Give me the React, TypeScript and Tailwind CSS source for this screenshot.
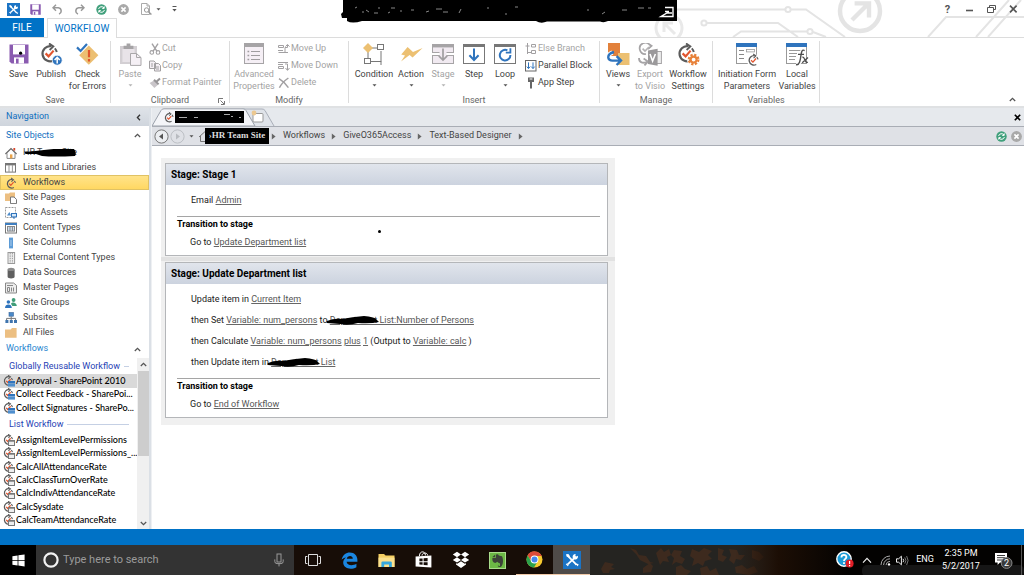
import React from "react";

type Kids = { children?: React.ReactNode };

function Svg({ w, h, vb, children, className = "" }: Kids & { w: number; h: number; vb?: string; className?: string }) {
  return (
    <svg width={w} height={h} viewBox={vb ?? `0 0 ${w} ${h}`} fill="none" aria-hidden="true" className={`shrink-0 ${className}`}>
      {children}
    </svg>
  );
}

/* ---------- shared glyphs ---------- */

function ToolsLogo({ size }: { size: number }) {
  return (
    <Svg w={size} h={size} vb="0 0 18 18">
      <rect width="18" height="18" fill="#1b74c5" />
      <path d="M4.6 4.6 L13.6 13.8 M12.6 5.8 L4.4 13.6" stroke="#fff" strokeWidth="1.8" />
      <path d="M3 3.2 L5.4 3 L7 5.2 L5.6 6.6 L3.6 5.6 Z" fill="#fff" />
      <path d="M14.8 4.8 A2.7 2.7 0 1 1 12.6 3.1 L12.4 5 L13.2 5.6 Z" fill="#fff" />
      <path d="M3.2 12.8 L5.2 14.9 M12.2 13.2 L14.8 13.6 L14.4 15" stroke="#fff" strokeWidth="1.2" />
    </Svg>
  );
}

function Cycle({ x = 0, y = 0, s = 1 }: { x?: number; y?: number; s?: number }) {
  return (
    <g transform={`translate(${x} ${y}) scale(${s})`}>
      <path d="M14 17.2 A7.6 7.6 0 1 1 11.6 3.2" stroke="#5b5b5b" strokeWidth="2.2" />
      <path d="M9 0.4 L13.4 3.4 L9.6 7" stroke="#5b5b5b" strokeWidth="1.8" />
      <path d="M14.8 5.4 A7.6 7.6 0 0 1 16.8 9" stroke="#5b5b5b" strokeWidth="2" />
      <path d="M5.6 10.4 L8.6 13.4 L13.6 7.6" stroke="#e2552f" strokeWidth="2.2" />
    </g>
  );
}

function RefreshDot() {
  return (
    <Svg w={11} h={11}>
      <circle cx="5.5" cy="5.5" r="5.2" fill="#41a07c" />
      <path d="M2.6 5 A3 3 0 0 1 8 4 M8.2 2.4 V4.4 H6.2 M8.4 6 A3 3 0 0 1 3 7 M2.8 8.6 V6.6 H4.8" stroke="#fff" strokeWidth="1" />
    </Svg>
  );
}

function StopDot() {
  return (
    <Svg w={11} h={11}>
      <circle cx="5.5" cy="5.5" r="5.4" fill="#a9a9a9" />
      <path d="M3.4 3.4 L7.6 7.6 M7.6 3.4 L3.4 7.6" stroke="#fff" strokeWidth="1.6" />
    </Svg>
  );
}

function Floppy({ size, dot }: { size: number; dot?: boolean }) {
  return (
    <Svg w={size} h={size} vb="0 0 20 20">
      <path d="M0.5 0.5 H19.5 V19.5 H2.5 L0.5 17.5 Z" fill="#8a5bb0" />
      <rect x="4" y="1" width="12" height="9.4" fill="#fff" />
      <rect x="5" y="13.4" width="10" height="6.1" fill="#fff" />
      <rect x="7" y="14.6" width="2.6" height="4.9" fill="#8a5bb0" />
      {dot && <circle cx="11.6" cy="9.2" r="1.6" fill="#000" />}
    </Svg>
  );
}

function Caret({ dim }: { dim?: boolean }) {
  return (
    <Svg w={5} h={3}>
      <path d="M0.5 0.2 H4.5 L2.5 2.6 Z" fill={dim ? "#b5b5b5" : "#555"} />
    </Svg>
  );
}

/* ---------- ribbon icons ---------- */

const PublishIcon = (
  <Svg w={23} h={23}>
    <Cycle />
    <circle cx="17.2" cy="17.2" r="5" fill="#2f74bd" stroke="#fff" strokeWidth="0.8" />
    <path d="M17.2 20.6 V14.6 M14.6 17 L17.2 14.4 L19.8 17" stroke="#fff" strokeWidth="1.5" />
  </Svg>
);
const CheckIcon = (
  <Svg w={23} h={23}>
    <path d="M12.8 2.6 L22.4 12.2 L12.8 21.8 L3.2 12.2 Z" fill="#ecbf72" />
    <path d="M13 7 V14.2 M13 16 V18.4" stroke="#e0552b" strokeWidth="2.2" />
    <path d="M1 4.4 L4.6 8 L11 1" stroke="#2f74bd" strokeWidth="2.2" />
  </Svg>
);
const PasteIcon = (
  <Svg w={23} h={23}>
    <path d="M1 3 H18 V21 H1 Z" fill="#d3cfd3" />
    <path d="M3.4 6 H15.6 V19 H3.4 Z" fill="#e8e3e8" />
    <path d="M4.6 6 V2.8 H7.6 V0.6 H11.4 V2.8 H14.4 V6 Z" fill="#a5a3a5" />
    <path d="M11.5 10.5 H17.5 L22 14.5 V22.4 H11.5 Z" fill="#f5f0f5" stroke="#a9a7a9" />
    <path d="M17.5 10.5 V14.5 H22" stroke="#a9a7a9" />
  </Svg>
);
const AdvancedIcon = (
  <Svg w={20} h={22}>
    <rect x="0.5" y="0.5" width="19" height="20" fill="#f5eff5" stroke="#a6a4a6" />
    <rect width="20" height="4" fill="#a6a4a6" />
    <path d="M7 8.5 H16 M7 12.5 H16 M7 16.5 H16" stroke="#9f9d9f" />
    <path d="M3.5 8.5 H5.2 M3.5 12.5 H5.2 M3.5 16.5 H5.2" stroke="#9f9d9f" strokeWidth="1.4" />
  </Svg>
);
const ConditionIcon = (
  <Svg w={22} h={22}>
    <path d="M9 5 H14 M5 9 V16 M8 18.5 H18 V8 M18 18 V22" stroke="#777" />
    <path d="M5 0 L10 5 L5 10 L0 5 Z" fill="#ecc072" />
    <rect x="14.5" y="1.5" width="6" height="5" fill="#fff" stroke="#777" />
    <rect x="1.5" y="15.5" width="6" height="5" fill="#fff" stroke="#777" />
  </Svg>
);
const ActionIcon = (
  <Svg w={23} h={22}>
    <path d="M7.6 4 L13 9 L22.6 5 L12.6 14.6 L9.6 12 L1 18.6 L5 12.6 L1.2 11.4 Z" fill="#ecc072" />
  </Svg>
);
const StageIcon = (
  <Svg w={22} h={22}>
    <rect x="0.5" y="1.5" width="21" height="8" fill="#f1eaf1" stroke="#a6a4a6" />
    <rect x="0" y="1" width="22" height="3.4" fill="#a6a4a6" />
    <rect x="0.5" y="12.5" width="21" height="8" fill="#f1eaf1" stroke="#a6a4a6" />
    <rect x="7.5" y="7" width="7" height="11" fill="#f1eaf1" />
    <path d="M11 5.6 V16.6 M6.8 12.8 L11 17 L15.2 12.8" stroke="#a09ea0" strokeWidth="1.7" />
  </Svg>
);
const StepIcon = (
  <Svg w={22} h={22}>
    <rect x="0.5" y="1.5" width="21" height="19" fill="#fff" stroke="#777" />
    <rect x="0" y="1" width="22" height="3" fill="#777" />
    <path d="M11 5.6 V17 M6.4 12.2 L11 17 L15.6 12.2" stroke="#2f74bd" strokeWidth="2" />
  </Svg>
);
const LoopIcon = (
  <Svg w={22} h={22}>
    <rect x="0.5" y="1.5" width="21" height="19" fill="#fff" stroke="#777" />
    <rect x="0" y="1" width="22" height="3" fill="#777" />
    <path d="M16.4 12 A5.3 5.3 0 1 1 13.4 7.4" stroke="#2f74bd" strokeWidth="2" />
    <path d="M16.4 5.2 V9.6 H11.8" stroke="#2f74bd" strokeWidth="1.8" />
  </Svg>
);
const ViewsIcon = (
  <Svg w={23} h={23}>
    <rect x="1" y="0" width="12" height="13" fill="#e2813b" />
    <rect x="11" y="10" width="11.5" height="12" fill="#ecc072" />
    <path d="M5.4 9.4 C-0.6 12 0 18 6 17.6 H13" stroke="#fff" strokeWidth="4.4" />
    <path d="M7 9 C-1 11 0 18 6 17.6 H13 M9.6 13.2 L14 17.6 L9.6 22" stroke="#2f74bd" strokeWidth="2.4" />
  </Svg>
);
const VisioIcon = (
  <Svg w={24} h={23}>
    <path d="M12 2.4 A5.6 5.6 0 1 0 8 11 M9.4 0 L13.6 2.8 L10 6" stroke="#a6a4a6" strokeWidth="1.7" />
    <path d="M4.6 5.6 L7 8 L11 4" stroke="#b5b3b5" strokeWidth="1.6" />
    <path d="M1 15 C1 20 5 20.6 9 18.8 M5.6 15.6 L10 18.6 L6.4 22.4" stroke="#a6a4a6" strokeWidth="1.8" />
    <rect x="17" y="8.5" width="6.4" height="12" fill="#eee" stroke="#a6a4a6" />
    <path d="M10 7.4 L19.6 5.8 V22.8 L10 21 Z" fill="#9b999b" />
    <path d="M12 11 L14.6 18 L17.4 11" stroke="#fff" strokeWidth="1.6" />
  </Svg>
);
const SettingsIcon = (
  <Svg w={23} h={23}>
    <Cycle />
    <circle cx="16.6" cy="16.6" r="5.6" stroke="#fff" strokeWidth="2" />
    <circle cx="16.6" cy="16.6" r="4.8" stroke="#e8823a" strokeWidth="2.2" strokeDasharray="2.2 1.57" />
    <circle cx="16.6" cy="16.6" r="3" stroke="#e8823a" strokeWidth="2.2" />
  </Svg>
);
const FormIcon = (
  <Svg w={23} h={23}>
    <rect x="0.5" y="1.5" width="20" height="19" fill="#fff" stroke="#999" />
    <rect x="0" y="0" width="21" height="4" fill="#2f74bd" />
    <path d="M3 7.5 H8 M3 11.5 H8 M3 15.5 H8" stroke="#888" />
    <rect x="10.5" y="6.5" width="8" height="2.4" stroke="#999" strokeWidth="0.8" />
    <circle cx="16.8" cy="16.8" r="6.4" fill="#fff" />
    <Cycle x={11.6} y={10.8} s={0.62} />
  </Svg>
);
const LocalIcon = (
  <Svg w={23} h={23}>
    <rect x="0.5" y="1.5" width="20" height="19" fill="#fff" stroke="#999" />
    <rect x="0" y="0" width="21" height="4" fill="#2f74bd" />
    <path d="M3 7.5 H18 M3 10.5 H11 M3 13.5 H10 M3 16.5 H9" stroke="#999" />
    <path d="M18.6 7.6 C16 6 15.4 9 15 12 C14.4 17 13.6 22.6 10 21.6 M11.4 11.4 H18" stroke="#fff" strokeWidth="3.6" />
    <path d="M18.6 7.6 C16 6 15.4 9 15 12 C14.4 17 13.6 22.6 10 21.6 M12 11.4 H18" stroke="#4d4d4d" strokeWidth="1.4" />
    <path d="M16.4 14.4 C18.6 13 18.8 20.6 21.8 19.2 M22 14.6 L16.2 19.8" stroke="#4d4d4d" strokeWidth="1.3" />
  </Svg>
);

const CutIcon = (
  <Svg w={12} h={12}>
    <path d="M3 0.6 L8 8.4 M9 0.6 L4 8.4" stroke="#a2a0a2" strokeWidth="1.4" />
    <circle cx="2.8" cy="9.4" r="1.8" stroke="#a2a0a2" strokeWidth="1.1" />
    <circle cx="9" cy="9.4" r="1.8" stroke="#a2a0a2" strokeWidth="1.1" />
  </Svg>
);
const CopyIcon = (
  <Svg w={12} h={12}>
    <path d="M0.5 1 H5 L6.5 2.5 V8.5 H0.5 Z M5.5 3.5 H9.5 L11.5 5.5 V11 H5.5 Z" fill="#f5f0f5" stroke="#a2a0a2" />
    <path d="M2 4 H4 M2 6 H4 M7 7 H10 M7 9 H10" stroke="#a2a0a2" />
  </Svg>
);
const PainterIcon = (
  <Svg w={12} h={12}>
    <path d="M0.6 6 L5 3.6 L9 7.8 L5.4 11 Z" fill="#c9c5c9" />
    <path d="M5 2.8 L9.6 7.4 M7.4 4.8 L11 1.4" stroke="#969496" strokeWidth="2" />
  </Svg>
);
const MoveUpIcon = (
  <Svg w={12} h={12}>
    <path d="M0.5 2.5 H5.5 V4.5 H0.5 Z M0 7.5 H5 M0.5 9.5 H10 M7 9 V4.5 H9.5 V2 M7.5 3.6 L9.5 1.4 L11.5 3.6" stroke="#a2a0a2" />
  </Svg>
);
const MoveDownIcon = (
  <Svg w={12} h={12}>
    <path d="M0.5 6.5 H5.5 V8.5 H0.5 Z M0 2.5 H10 M0 4.5 H5 M7 4 H9.5 V10 M7.5 8 L9.5 10.4 L11.5 8" stroke="#a2a0a2" />
  </Svg>
);
const DeleteIcon = (
  <Svg w={12} h={12}>
    <path d="M1 1.6 C5 4 8 7 10.4 10.6 M10.4 1 C6 4 3 7.4 1.4 10.8" stroke="#a2a0a2" strokeWidth="1.5" />
  </Svg>
);
const ElseIcon = (
  <Svg w={12} h={12}>
    <path d="M2.5 0 V11 M0.5 3 H4.5 M2.5 9.5 H6" stroke="#a2a0a2" />
    <path d="M6.5 1.5 H10.5 V4 H6.5 Z M6.5 7.5 H10.5 V10.5 H6.5 Z" stroke="#a2a0a2" />
  </Svg>
);
const ParallelIcon = (
  <Svg w={12} h={12}>
    <rect x="0.5" y="0.5" width="10.5" height="10.5" fill="#fff" stroke="#666" />
    <path d="M3.5 2.4 V8.4 M1.8 6.6 L3.5 8.6 L5.2 6.6 M8 2.4 V8.4 M6.3 6.6 L8 8.6 L9.7 6.6" stroke="#2f74bd" />
  </Svg>
);
const AppStepIcon = (
  <Svg w={12} h={12}>
    <path d="M3 0.6 H9 V5 H7 V11.6 H5 V5 H3 Z" fill="#666" />
    <path d="M4.6 2 H7.4" stroke="#fff" />
  </Svg>
);

/* ---------- ribbon pieces ---------- */

function Big({ icon, lines, dim, menu, w }: { icon: React.ReactNode; lines: string[]; dim?: boolean; menu?: boolean; w: string }) {
  return (
    <button type="button" className={`flex shrink-0 flex-col items-center pt-1 ${w} ${dim ? "text-[#a3a3a3]" : "text-[#444]"}`}>
      <span className="flex h-6 items-center justify-center">{icon}</span>
      <span className="mt-[2px] flex flex-col items-center text-[9px] leading-3 whitespace-nowrap">
        {lines.map((l) => (
          <span key={l}>{l}</span>
        ))}
      </span>
      {menu && (
        <span className="mt-1">
          <Caret dim={dim} />
        </span>
      )}
    </button>
  );
}

function Small({ icon, label, dim = true }: { icon: React.ReactNode; label: string; dim?: boolean }) {
  return (
    <button type="button" className={`flex h-[17px] items-center gap-px text-[9px] whitespace-nowrap ${dim ? "text-[#a3a3a3]" : "text-[#444]"}`}>
      {icon}
      {label}
    </button>
  );
}

function Group({ label, w, corner, children }: Kids & { label: string; w: string; corner?: boolean }) {
  return (
    <section aria-label={label} className={`flex shrink-0 ${w}`}>
      <div className="flex min-w-0 flex-1 flex-col">
        <div className="flex flex-1">{children}</div>
        <div className="relative flex h-3 items-center justify-center text-[9px] leading-3 text-[#666]">
          {label}
          {corner && (
            <Svg w={7} h={7} className="absolute right-1 top-1">
              <path d="M0.5 5 V0.5 H5 M2.5 2.5 L6 6 M6.5 3 V6.5 H3" stroke="#777" />
            </Svg>
          )}
        </div>
      </div>
      <div className="my-[3px] w-px bg-[#dcdcdc]" />
    </section>
  );
}

function QuickAccess() {
  return (
    <div className="relative flex h-[18px] items-center pl-[7px]">
      <ToolsLogo size={13} />
      <div className="flex items-center gap-[11px] pl-[10px]">
        <button type="button" aria-label="Save file"><Floppy size={11} /></button>
        <button type="button" aria-label="Undo">
          <Svg w={11} h={11}><path d="M4 0.8 L1 3.8 L4 6.8 M1 3.8 H6.4 A3.2 3.2 0 0 1 7 10" stroke="#999" strokeWidth="1.5" /></Svg>
        </button>
        <button type="button" aria-label="Redo">
          <Svg w={11} h={11}><path d="M7 0.8 L10 3.8 L7 6.8 M10 3.8 H4.6 A3.2 3.2 0 0 0 4 10" stroke="#999" strokeWidth="1.5" /></Svg>
        </button>
        <button type="button" aria-label="Refresh view"><RefreshDot /></button>
        <button type="button" aria-label="Stop loading"><StopDot /></button>
        <button type="button" aria-label="Preview" className="flex items-center gap-1">
          <Svg w={12} h={12}>
            <path d="M1.5 0.5 H7 L9.5 3 V11.5 H1.5 Z M7 0.5 V3 H9.5" stroke="#aaa" />
            <circle cx="6.6" cy="7" r="2.2" fill="#fff" stroke="#999" />
            <path d="M8.2 8.6 L11.4 11.6" stroke="#999" strokeWidth="1.4" />
          </Svg>
          <Caret />
        </button>
        <button type="button" aria-label="Customize toolbar">
          <Svg w={5} h={6}><path d="M0.5 0.5 H4.5" stroke="#555" /><path d="M0.4 3 H4.6 L2.5 5.4 Z" fill="#555" /></Svg>
        </button>
      </div>
      <div className="ml-auto flex items-center gap-[11px] pr-[5px] text-[#555]">
        <button type="button" aria-label="Help" className="w-[11px] text-[11px] leading-none font-bold">?</button>
        <button type="button" aria-label="Minimize"><Svg w={11} h={10}><path d="M2 6.5 H9" stroke="#555" strokeWidth="1.6" /></Svg></button>
        <button type="button" aria-label="Restore"><Svg w={11} h={10}><path d="M3.5 3.5 V1.5 H9.5 V5.5 H8 M1.5 3.5 H7.5 V8.5 H1.5 Z" stroke="#555" /></Svg></button>
        <button type="button" aria-label="Close"><Svg w={11} h={10}><path d="M2 1.6 L8.6 8.4 M8.6 1.6 L2 8.4" stroke="#555" strokeWidth="1.6" /></Svg></button>
      </div>
    </div>
  );
}

function Circuit() {
  return (
    <svg width="374" height="37" viewBox="650 0 374 37" fill="none" aria-hidden="true" className="absolute top-0 right-0">
      <g stroke="#e4e4e4" strokeWidth="2">
        <path d="M676 9.5 H785 M791 9.5 H806 L845 37 M707 23 H778 L798 37 M733 37 L741 31.5 H807 M813 32 L826 37" />
        <circle cx="788" cy="9.5" r="2.6" />
        <circle cx="704" cy="23" r="2.6" />
        <circle cx="810" cy="31.5" r="2.6" />
        <path d="M928 37 L946 17 H1024 M976 37 L1009 0 M988 37 L1021 0" />
      </g>
      <circle cx="860" cy="11" r="20" stroke="#e4e4e4" strokeWidth="4.5" />
      <path d="M852 20 L868 4 M854.6 3.4 H869 V17.6" stroke="#e4e4e4" strokeWidth="4.4" />
      <circle cx="669" cy="28" r="13" stroke="#e9e9e9" strokeWidth="3" />
      <path d="M675 34 L665 24 M664 32 V23 H673" stroke="#e9e9e9" strokeWidth="3" />
    </svg>
  );
}

function TitleInk() {
  return (
    <svg width="336" height="23" viewBox="341 0 336 23" aria-hidden="true" className="absolute top-0 left-[341px]">
      <path d="M343 0 H677 V21 H608 Q604 23 600 21.5 H547 Q541 24 536 21 H362 Q352 24 347 21 V18 H342 L341 14 L343 12 Z" fill="#000" />
      <path d="M355 8 l2 -1 M362 12 h2 M366 10 l3 2 M374 13 h4 M379 7 v2 M391 8 h4 M388 13 l2 -1 M400 11 h2 M411 10 h3 M426 12 l3 -1 M436 9 h6 M443 12 h5 M459 13 l2 -4 M488 7 v2 M505 14 h2 M515 7 h3 M587 10 h2 M602 14 l3 -2 M622 10 h5 M638 8 h6 M648 8 h3" stroke="#aaa" strokeWidth="0.8" />
      <path d="M665 7.5 H673 V16.5 H661 L667 13 H672 M665 11.5 H669" fill="none" stroke="#fff" strokeWidth="1.4" />
    </svg>
  );
}

function Ribbon() {
  return (
    <header className="relative shrink-0 bg-white">
      <Circuit />
      <QuickAccess />
      <TitleInk />
      <div className="relative flex h-5 items-stretch border-b border-[#dcdcdc] text-[10px]" role="tablist">
        <button type="button" role="tab" aria-selected="false" className="w-11 bg-[#0072c6] text-white">FILE</button>
        <button type="button" role="tab" aria-selected="true" className="-mb-px ml-[3px] w-[70px] border border-b-0 border-[#dcdcdc] bg-white text-[#0072c6]">
          WORKFLOW
        </button>
      </div>
      <div className="relative flex h-[68px] bg-white">
        <Group label="Save" w="w-[111px]">
          <Big w="w-[37px]" icon={<Floppy size={20} dot />} lines={["Save"]} />
          <Big w="w-7" icon={PublishIcon} lines={["Publish"]} />
          <Big w="w-[45px]" icon={CheckIcon} lines={["Check", "for Errors"]} />
        </Group>
        <Group label="Clipboard" w="w-[119px]" corner>
          <Big w="w-[38px]" icon={PasteIcon} lines={["Paste"]} dim menu />
          <div className="flex flex-col pt-[2px]">
            <Small icon={CutIcon} label="Cut" />
            <Small icon={CopyIcon} label="Copy" />
            <Small icon={PainterIcon} label="Format Painter" />
          </div>
        </Group>
        <Group label="Modify" w="w-[119px]">
          <Big w="w-12" icon={AdvancedIcon} lines={["Advanced", "Properties"]} dim />
          <div className="flex flex-col pt-[2px]">
            <Small icon={MoveUpIcon} label="Move Up" />
            <Small icon={MoveDownIcon} label="Move Down" />
            <Small icon={DeleteIcon} label="Delete" />
          </div>
        </Group>
        <Group label="Insert" w="w-[251px]">
          <Big w="w-[50px]" icon={ConditionIcon} lines={["Condition"]} menu />
          <Big w="w-6" icon={ActionIcon} lines={["Action"]} menu />
          <Big w="w-10" icon={StageIcon} lines={["Stage"]} dim menu />
          <Big w="w-[22px]" icon={StepIcon} lines={["Step"]} />
          <Big w="w-10" icon={LoopIcon} lines={["Loop"]} menu />
          <div className="flex flex-col pt-[2px]">
            <Small icon={ElseIcon} label="Else Branch" />
            <Small icon={ParallelIcon} label="Parallel Block" dim={false} />
            <Small icon={AppStepIcon} label="App Step" dim={false} />
          </div>
        </Group>
        <Group label="Manage" w="w-[113px]">
          <Big w="w-9" icon={ViewsIcon} lines={["Views"]} menu />
          <Big w="w-7" icon={VisioIcon} lines={["Export", "to Visio"]} dim />
          <Big w="w-12" icon={SettingsIcon} lines={["Workflow", "Settings"]} />
        </Group>
        <Group label="Variables" w="w-[107px]">
          <Big w="w-[68px]" icon={FormIcon} lines={["Initiation Form", "Parameters"]} />
          <Big w="w-8" icon={LocalIcon} lines={["Local", "Variables"]} />
        </Group>
        <button type="button" aria-label="Collapse ribbon" className="mt-auto mr-2 mb-1 ml-auto">
          <Chevron />
        </button>
      </div>
    </header>
  );
}

/* ---------- navigation pane ---------- */

const siteIcons: Record<string, React.ReactNode> = {
  home: <><path d="M2 6.4 V11.4 H10 V6.4" fill="#fff" stroke="#888" /><path d="M0.4 7 L6 1.6 L11.6 7" stroke="#666" strokeWidth="1.3" /><rect x="5" y="7.4" width="2.4" height="4" fill="#e8a24a" /><rect x="8.4" y="1" width="1.8" height="2.6" fill="#d5452c" /></>,
  lists: <><rect x="0.5" y="1.5" width="10" height="8.6" fill="#fff" stroke="#777" /><path d="M0 2.4 H11" stroke="#777" strokeWidth="2" /><path d="M4 3 V10 M7.4 3 V10" stroke="#999" /></>,
  flow: <Cycle x={1} y={0.8} s={0.56} />,
  pages: <><path d="M0 1.6 H4 L5 0.6 H10 V9 H0 Z" fill="#ecbf82" /><path d="M5.5 5 H9 L11.5 7.4 V11.6 H5.5 Z" fill="#fff" stroke="#777" /></>,
  assets: <><rect x="0.5" y="0.5" width="10" height="10" fill="#fff" stroke="#999" strokeDasharray="2 1" /><path d="M2 8.4 L4.4 5 L6 8.4 Z" fill="#4b8ac9" /><rect x="6.5" y="6.5" width="5" height="3.4" fill="#d6e8f8" stroke="#2f74bd" /><path d="M9 10 V12" stroke="#2f74bd" /></>,
  content: <><rect x="0.5" y="1" width="11" height="10" fill="#fff" stroke="#777" /><path d="M0 2 H12" stroke="#3f7fc0" strokeWidth="2" /><rect x="2.5" y="4.5" width="7" height="4.6" fill="#cfe0f2" stroke="#888" /><path d="M5 5 V9 M7.4 5 V9" stroke="#888" /></>,
  columns: <><rect x="4" y="0.6" width="4" height="10.8" fill="#5c9bd6" /><path d="M5 4 H7 M5 6 H7 M5 8 H7" stroke="#cfe0f2" strokeWidth="0.7" /></>,
  external: <><rect x="3" y="0.5" width="6.6" height="11" fill="#eee" stroke="#999" /><path d="M5.2 1 V11 M7.4 1 V11" stroke="#999" strokeDasharray="1.4 1" /></>,
  data: <><path d="M2.6 2.4 V9.8 C2.6 12 9.6 12 9.6 9.8 V2.4 Z" fill="#5f5f5f" /><ellipse cx="6.1" cy="2.4" rx="3.5" ry="1.6" fill="#8a8a8a" /></>,
  master: <><path d="M0.5 1 H8.6 L11.5 3.4 V11 H0.5 Z" fill="#eee" stroke="#888" /><path d="M2 3.5 H8 M2.5 5.5 V9.5 H4.5 V5.5 Z M6.5 5.5 V9.5 M8.5 5.5 V9.5" stroke="#888" /></>,
  groups: <><circle cx="3.4" cy="5" r="1.8" fill="#2f74bd" /><path d="M0 11 C0 6.4 6.8 6.4 6.8 11 Z" fill="#2f74bd" /><circle cx="8.6" cy="3" r="1.9" fill="#3f9c78" /><path d="M6 6.8 C7 4.4 11.6 5 11.8 9 H7.4 Z" fill="#3f9c78" /></>,
  subsites: <><rect x="4" y="0.6" width="4.4" height="3.6" fill="#4b8ac9" stroke="#2f5f96" strokeWidth="0.6" /><path d="M6.2 4.4 V6.4 M1.6 8.4 V6.4 H10.6 V8.4 M6.2 6.4 V8.4" stroke="#777" /><path d="M0.4 8 H3.4 V11 H0.4 Z M4.8 8 H7.8 V11 H4.8 Z M9 8 H12 V11 H9 Z" fill="#3f74ad" /></>,
  files: <path d="M0 2.4 H5.6 L7 1 H11.6 V10.8 H0 Z" fill="#ecbf82" />,
};

const siteObjects = [
  { icon: "home", label: "HR Team Site", inked: true },
  { icon: "lists", label: "Lists and Libraries" },
  { icon: "flow", label: "Workflows", selected: true },
  { icon: "pages", label: "Site Pages" },
  { icon: "assets", label: "Site Assets" },
  { icon: "content", label: "Content Types" },
  { icon: "columns", label: "Site Columns" },
  { icon: "external", label: "External Content Types" },
  { icon: "data", label: "Data Sources" },
  { icon: "master", label: "Master Pages" },
  { icon: "groups", label: "Site Groups" },
  { icon: "subsites", label: "Subsites" },
  { icon: "files", label: "All Files" },
];

const sharedFlows = ["Approval - SharePoint 2010", "Collect Feedback - SharePoi...", "Collect Signatures - SharePo..."];

const listFlows = [
  "AssignItemLevelPermissions",
  "AssignItemLevelPermissions_...",
  "CalcAllAttendanceRate",
  "CalcClassTurnOverRate",
  "CalcIndivAttendanceRate",
  "CalcSysdate",
  "CalcTeamAttendanceRate",
];

function Chevron() {
  return <Svg w={7} h={5}><path d="M0.8 4 L3.5 1.4 L6.2 4" stroke="#555" strokeWidth="1.3" /></Svg>;
}

function FlowItem({ label, shared, selected }: { label: string; shared?: boolean; selected?: boolean }) {
  return (
    <li className={`flex min-h-0 items-center ${selected ? "bg-[#d9d9d9]" : ""}`}>
      <a href="#workflow" className="flex min-w-0 flex-1 items-center pl-[3px] font-[Lato,sans-serif] text-[9px] leading-3 font-medium whitespace-nowrap text-black">
        <Svg w={13} h={12}>
          <Cycle s={0.56} />
          {shared ? (
            <><rect x="5" y="6" width="7" height="2.6" fill="#2f74bd" /><rect x="5" y="9" width="7" height="2.6" fill="#4f8fce" /></>
          ) : (
            <><rect x="5.5" y="6.5" width="6" height="5" fill="#eee" stroke="#777" /><path d="M5 7 H12" stroke="#777" strokeWidth="1.4" /></>
          )}
        </Svg>
        {label}
      </a>
    </li>
  );
}

function ListHeading({ children }: Kids) {
  return (
    <h3 className="flex h-[15px] items-center gap-1 pr-2 pl-[9px] text-[9px] whitespace-nowrap text-[#1f3fb5]">
      {children}
      <span className="h-px flex-1 bg-[#c5d0e4]" />
    </h3>
  );
}

function Navigation() {
  return (
    <nav aria-label="Navigation" className="flex w-[149px] shrink-0 flex-col overflow-hidden bg-white">
      <div className="flex h-[18px] shrink-0 items-center justify-between bg-linear-to-b from-[#dfe3e8] to-[#cfd5dd] pr-2 pl-[6px] text-[9px] text-[#0f6fc0]">
        Navigation
        <button type="button" aria-label="Collapse navigation">
          <Svg w={5} h={7}><path d="M4 0.8 L1.4 3.5 L4 6.2" stroke="#333" strokeWidth="1.3" /></Svg>
        </button>
      </div>
      <h2 className="flex h-[19px] shrink-0 items-center justify-between pr-2 pl-[6px] text-[9px] text-[#0f6fc0]">
        Site Objects
        <Chevron />
      </h2>
      <ul className="shrink-0">
        {siteObjects.map((o) => (
          <li key={o.label} className={`flex h-[15px] items-center ${o.selected ? "bg-linear-to-b from-[#ffe48c] to-[#ffd75e] ring-1 ring-[#e0c264] ring-inset" : ""}`}>
            <a href="#site" className="flex items-center gap-[6px] pl-[5px] text-[9px] text-[#444]">
              <Svg w={12} h={12}>{siteIcons[o.icon]}</Svg>
              <span className="relative whitespace-nowrap">
                {o.label}
                {o.inked && (
                  <svg width="55" height="8" viewBox="0 0 53 8" aria-hidden="true" className="absolute top-[3px] left-0">
                    <path d="M1 3 Q12 2 20 1 Q34 -1 50 0 Q53 4 51 7 Q30 8 18 7 L12 5 L2 5 Q0 4 1 3 Z" fill="#000" />
                  </svg>
                )}
              </span>
            </a>
          </li>
        ))}
      </ul>
      <h2 className="flex h-[18px] shrink-0 items-center justify-between pr-2 pl-[6px] text-[9px] text-[#2a86cf]">
        Workflows
        <Chevron />
      </h2>
      <div className="flex min-h-0 flex-1">
        <div className="min-w-0 flex-1 overflow-hidden pt-px">
          <ListHeading>Globally Reusable Workflow</ListHeading>
          <ul className="grid h-[41px] auto-rows-fr">
            {sharedFlows.map((l, i) => (
              <FlowItem key={l} label={l} shared selected={i === 0} />
            ))}
          </ul>
          <div className="pt-[2px] pb-px">
            <ListHeading>List Workflow</ListHeading>
          </div>
          <ul className="grid h-[94px] auto-rows-fr">
            {listFlows.map((l) => (
              <FlowItem key={l} label={l} />
            ))}
          </ul>
        </div>
        <div className="flex w-3 shrink-0 flex-col items-center justify-between bg-[#f0f0f0] pt-1 pb-[3px]">
          <Chevron />
          <span className="mt-1 mb-auto h-[85px] w-[11px] bg-[#cdcdcd]" />
          <Svg w={7} h={5}><path d="M0.8 1 L3.5 3.6 L6.2 1" stroke="#555" strokeWidth="1.3" /></Svg>
        </div>
      </div>
    </nav>
  );
}

/* ---------- editor ---------- */

function TabStrip() {
  return (
    <div className="flex h-[18px] shrink-0 items-stretch bg-[#e6e9ed]">
      <div className="relative h-[18px] w-[119px]">
        <Svg w={125} h={18} className="absolute top-0 left-0">
          <path d="M82 17.5 L89 2.5 Q90 1 92 1 H110 Q112 1 113 2.5 L122 18" fill="#dfe3e9" stroke="#a9aeb8" />
          <path d="M0 18 L9 2.5 Q10 0.8 12 0.8 H91 Q93 0.8 94 2.5 L103 18 Z" fill="#f4f5f8" stroke="#9aa0aa" />
          <rect x="101" y="5.5" width="10" height="8.5" rx="1" fill="#fff" stroke="#999" />
          <circle cx="102" cy="5" r="2.4" fill="#ecc890" />
          <Cycle x={12} y={4} s={0.54} />
          <rect x="23" y="3" width="69" height="12" fill="#000" />
          <path d="M27 9.5 h8 M42 9.5 h4 M72 6.5 h6 M79 8.5 h2 M87 9.5 h2" stroke="#aaa" />
        </Svg>
      </div>
      <button type="button" aria-label="Close page" className="ml-auto pr-[3px]">
        <Svg w={7} h={7}><path d="M0.8 0.8 L6.2 6.2 M6.2 0.8 L0.8 6.2" stroke="#000" strokeWidth="1.6" /></Svg>
      </button>
    </div>
  );
}

function CrumbArrow() {
  return <Svg w={5} h={7}><path d="M0.8 0.4 L4.6 3.5 L0.8 6.6 Z" fill="#666" /></Svg>;
}

function AddressBar() {
  return (
    <div className="flex h-5 shrink-0 items-center border-y border-[#a9adb5] bg-[#dfe1e6] pr-[2px] pl-[2px] text-[9px] text-[#444]">
      <button type="button" aria-label="Back">
        <Svg w={15} h={15}><circle cx="7.5" cy="7.5" r="6.6" fill="#eceef1" stroke="#777" /><path d="M9 4.4 L5 7.5 L9 10.6 Z" fill="#555" /></Svg>
      </button>
      <button type="button" aria-label="Forward" className="ml-px">
        <Svg w={15} h={15}><circle cx="7.5" cy="7.5" r="6.6" stroke="#bcbfc4" /><path d="M6 4.4 L10 7.5 L6 10.6 Z" fill="#b8bbc0" /></Svg>
      </button>
      <button type="button" aria-label="Recent pages" className="px-1"><Caret /></button>
      <Svg w={7} h={12}><path d="M7 1.6 L1 7 M2.5 6 V11.5 H7" stroke="#777" /></Svg>
      <a href="#team" className="flex h-4 w-16 shrink-0 items-center justify-center bg-black font-['Liberation_Serif',serif] text-[9px] font-bold whitespace-nowrap text-[#ddd]">
        ›HR Team Site
      </a>
      <div className="flex items-center gap-[6px] pl-[2px] whitespace-nowrap">
        <CrumbArrow />
        <a href="#workflows" className="pl-px">Workflows</a>
        <CrumbArrow />
        <a href="#access" className="pl-px">GiveO365Access</a>
        <CrumbArrow />
        <a href="#designer" className="pl-px">Text-Based Designer</a>
        <CrumbArrow />
      </div>
      <div className="ml-auto flex gap-1">
        <button type="button" aria-label="Refresh"><RefreshDot /></button>
        <button type="button" aria-label="Stop"><StopDot /></button>
      </div>
    </div>
  );
}

function Ref({ children }: Kids) {
  return <a href="#edit" className="text-[#555] underline decoration-[#666] underline-offset-1">{children}</a>;
}

function InkedRef({ children }: Kids) {
  return (
    <span className="relative">
      <Ref>{children}</Ref>
      <svg width="54" height="9" viewBox="0 0 54 9" aria-hidden="true" className="absolute top-px left-[-4px]">
        <path d="M1 5 Q8 2 16 3 Q26 1 38 0 Q48 1 50 3 L53 6 Q44 8 32 7 Q22 10 14 8 L1 7 Q0 6 1 5 Z" fill="#000" />
      </svg>
    </span>
  );
}

function Stage({ title, target, children }: Kids & { title: string; target: string }) {
  return (
    <section className="border border-[#b4b6b9] bg-white text-[9px] text-[#222]">
      <h2 className="flex h-[21px] items-center bg-linear-to-b from-[#e1e5ec] to-[#ccd3df] pl-[5px] text-[10px] font-bold text-black">{title}</h2>
      <div className="pt-[5px] pr-[7px] pb-[2px] pl-[11px]">
        <div className="pb-[5px] pl-[14px] whitespace-nowrap [&>p]:leading-[21px]">{children}</div>
        <div className="border-t border-[#a5a5a5]">
          <h3 className="h-[15px] leading-[14px] font-bold text-black">Transition to stage</h3>
          <p className="pl-[13px] leading-[21px]">
            Go to <Ref>{target}</Ref>
          </p>
        </div>
      </div>
    </section>
  );
}

function Designer() {
  return (
    <main className="relative min-h-0 flex-1 overflow-hidden bg-white pt-3 pl-[9px]">
      <div className="flex w-[454px] max-w-full flex-col bg-[#f0f0f0] pt-[5px] pb-[7px]">
        <div className="pr-[7px] pl-1">
          <Stage title="Stage: Stage 1" target="Update Department list">
            <p>Email <Ref>Admin</Ref></p>
          </Stage>
        </div>
        <div className="h-[6px] border-y border-[#f0f0f0] bg-[#e2e2e2]" />
        <div className="pr-[7px] pl-1">
          <Stage title="Stage: Update Department list" target="End of Workflow">
            <p>Update item in <Ref>Current Item</Ref></p>
            <p>then Set <Ref>Variable: num_persons</Ref> to <InkedRef>Department List:Number of Persons</InkedRef></p>
            <p>then Calculate <Ref>Variable: num_persons</Ref> <Ref>plus</Ref> <Ref>1</Ref> (Output to <Ref>Variable: calc</Ref> )</p>
            <p>then Update item in <InkedRef>Department List</InkedRef></p>
          </Stage>
        </div>
      </div>
      <span className="absolute top-[84px] left-[226px] size-[3px] rounded-full bg-black" />
    </main>
  );
}

/* ---------- taskbar ---------- */

const EdgeIcon = (
  <Svg w={17} h={17}>
    <path d="M0.6 7.6 C1.8 2.4 5 0.4 8.8 0.4 C13.6 0.4 16.4 3.8 16.4 8 V9.8 H5.6 C5.8 13.4 11.4 14.4 15.4 11.8 V15.2 C9.6 18.4 2.2 16.4 2.2 10.6 C2.2 8.4 3.4 6.4 5 5.4 C3.2 5.6 1.6 6.4 0.6 7.6 Z M5.8 6.8 H11.8 C11.8 3 6.4 3 5.8 6.8 Z" fill="#1b86e0" fillRule="evenodd" />
  </Svg>
);
const FolderIcon = (
  <Svg w={17} h={15}>
    <path d="M0.5 1 H6 L7.6 2.6 H16.5 V14 H0.5 Z" fill="#f5cf63" />
    <path d="M0.5 4.6 H16.5 V14 H0.5 Z" fill="#fbe18e" />
    <path d="M3.4 14 V9.6 Q3.4 8.4 4.6 8.4 H12.6 Q13.8 8.4 13.8 9.6 V14 H11 V11.4 H6.2 V14 Z" fill="#34a8de" />
  </Svg>
);
const StoreIcon = (
  <Svg w={17} h={18}>
    <path d="M4.4 5 C4.4 -0.4 10.4 -0.4 10.4 4.4 M7 4.6 C7.4 1 12.6 1.4 12.6 4.4" stroke="#fff" />
    <path d="M0.6 5.4 L16.4 4.4 V16.4 L0.6 15.4 Z" fill="#fff" />
    <path d="M4.4 7.6 L7.6 7.4 V10.2 H4.4 Z M8.6 7.3 L12.6 7 V10.2 H8.6 Z M4.4 11.2 H7.6 V13.8 L4.4 13.5 Z M8.6 11.2 H12.6 V14.2 L8.6 13.9 Z" fill="#160d07" />
  </Svg>
);
const DropboxIcon = (
  <Svg w={18} h={18}>
    <path d="M5 0.8 L9 3.4 L5 6.2 L0.8 3.4 Z M13 0.8 L17.2 3.4 L13 6.2 L9 3.4 Z M5 6.2 L9 9 L5 11.6 L0.8 9 Z M13 6.2 L17.2 9 L13 11.6 L9 9 Z M9 10.2 L12.8 12.8 L14 12.2 V13.6 L9 17 L4 13.6 V12.2 L5.2 12.8 Z" fill="#fff" />
  </Svg>
);
const EvernoteIcon = (
  <Svg w={17} h={17}>
    <rect x="0.5" y="0.5" width="16" height="16" fill="#6cb845" stroke="#a9dc8b" />
    <path d="M7 2.4 V5.8 H3.4 C3 9 4 11 6.4 11 L8.4 9.8 C9 11.2 11 11.2 11 11.6 V14 H9.4 V12.6 C7.6 15 10.4 15.4 12 14.8 C14.4 13 14.6 7 13 4.2 L9.8 3.4 L9 2.2 Z" fill="#3c4238" />
    <path d="M3.4 5 L6.2 2.4 V5 Z" fill="#3c4238" />
  </Svg>
);
const ChromeIcon = (
  <Svg w={17} h={17}>
    <circle cx="8.5" cy="8.5" r="8" fill="#f7c92f" />
    <path d="M1.6 4.4 A8 8 0 0 1 15.8 5 H8.5 L5.2 10 Z" fill="#dd4b3a" />
    <path d="M1.6 4.4 A8 8 0 0 0 8 16.5 L11.6 10.4 L5.4 10.4 Z" fill="#2ba24c" />
    <circle cx="8.5" cy="8.5" r="3.9" fill="#fff" />
    <circle cx="8.5" cy="8.5" r="3" fill="#4587ee" />
  </Svg>
);
const TaskViewIcon = (
  <Svg w={16} h={12}>
    <path d="M3.5 0.5 H12.5 V11.5 H3.5 Z M2.4 2.5 H0.5 V9.5 H2.4 M13.6 2.5 H15.5 V9.5 H13.6" stroke="#ddd" />
  </Svg>
);

const apps: { name: string; icon: React.ReactNode; state?: "open" | "active" }[] = [
  { name: "Task view", icon: TaskViewIcon },
  { name: "Edge", icon: EdgeIcon },
  { name: "File Explorer", icon: FolderIcon },
  { name: "Store", icon: StoreIcon },
  { name: "Dropbox", icon: DropboxIcon },
  { name: "Evernote", icon: EvernoteIcon },
  { name: "Chrome", icon: ChromeIcon, state: "open" },
  { name: "SharePoint Designer", icon: <ToolsLogo size={18} />, state: "active" },
];

function Wallpaper() {
  return (
    <svg width="436" height="30" viewBox="588 0 436 30" aria-hidden="true" className="absolute top-0 left-[588px]">
      <rect x="588" width="192" height="30" fill="#252421" />
      <g fill="#3d2a1e">
        <path d="M601 24 l4 -7 9 2 -3 3 4 2 -5 1 -1 3 -6 0 z M630 3 l6 2 3 5 7 1 4 6 4 1 -6 1 -8 -4 -4 -6 z M643 23 l7 -5 3 3 -2 6 -8 1 z" />
        <path d="M656 8 l5 -5 3 4 5 -3 2 6 -4 2 2 5 -6 -1 -3 4 -2 -6 z M674 5 l8 1 -2 5 5 3 -3 5 -6 -2 -4 3 2 -7 -3 -3 z M676 22 l5 -2 4 4 6 2 -4 4 -11 0 z" />
        <path d="M692 4 l7 3 5 -4 8 3 -4 4 4 4 -7 2 -2 5 -5 -3 -6 3 2 -7 -4 -3 z M700 23 l7 -2 3 5 6 -3 3 7 -18 0 z M718 3 l6 2 -2 5 5 2 -4 5 -5 -2 z" />
        <path d="M729 4 l8 1 2 5 6 0 -4 5 -5 -1 -2 5 -5 -4 2 -5 z M735 22 l7 -2 5 4 7 -3 4 6 -9 3 -13 -2 z M752 5 l7 2 5 5 -5 4 -7 -3 z" />
      </g>
      <rect x="735" width="289" height="30" fill="url(#fade)" />
      <rect x="862" y="20" width="162" height="12" rx="5" fill="#161616" />
      <defs>
        <linearGradient id="fade">
          <stop offset="0" stopColor="#2a1508" stopOpacity="0" />
          <stop offset="0.15" stopColor="#1c0e05" />
          <stop offset="0.4" stopColor="#030201" />
          <stop offset="1" stopColor="#030201" />
        </linearGradient>
      </defs>
    </svg>
  );
}

function Taskbar() {
  return (
    <footer className="relative flex h-[30px] shrink-0 items-stretch overflow-hidden bg-[#030201] text-white">
      <Wallpaper />
      <button type="button" aria-label="Start" className="flex w-9 items-center justify-center bg-black">
        <Svg w={13} h={13}>
          <path d="M0.4 2.2 L5.6 1.4 V6 H0.4 Z M6.4 1.3 L12.6 0.4 V6 H6.4 Z M0.4 6.8 H5.6 V11.4 L0.4 10.7 Z M6.4 6.8 H12.6 V12.6 L6.4 11.6 Z" fill="#fff" />
        </Svg>
      </button>
      <div className="flex w-[258px] shrink-0 items-center bg-[#333] pr-2 pl-[7px]">
        <Svg w={16} h={16}><circle cx="8" cy="8" r="6.6" stroke="#f2f2f2" strokeWidth="2.2" /></Svg>
        <input aria-label="Search" placeholder="Type here to search" className="min-w-0 flex-1 bg-transparent pl-1 text-[11px] text-white outline-none placeholder:text-[#9b9b9b]" />
        <button type="button" aria-label="Voice search">
          <Svg w={13} h={14}><rect x="4" y="1" width="4" height="8" stroke="#999" /><path d="M1.8 6.4 V8.4 Q1.8 10.6 4 10.6 H8 Q10.2 10.6 10.2 8.4 V6.4 M6 10.6 V13.4" stroke="#999" /></Svg>
        </button>
      </div>
      <div className="flex shrink-0 bg-[#170d07]">
        {apps.map((a) => (
          <button
            key={a.name}
            type="button"
            aria-label={a.name}
            className={`relative flex w-[37px] items-center justify-center ${a.state === "active" ? "bg-[#4f4b48]" : ""} ${a.state ? "border-b border-[#f0c9a8]" : ""}`}
          >
            {a.icon}
          </button>
        ))}
      </div>
      <div className="relative ml-auto flex items-center">
        <button type="button" aria-label="Support messages">
          <Svg w={18} h={18}>
            <circle cx="8" cy="8" r="7.2" fill="#1b9bd7" stroke="#fff" strokeWidth="1.4" />
            <path d="M5.4 6.4 C5.4 3 10.6 3.2 10.4 6.2 C10.2 8 8 7.8 8 10 M8 11.2 V13" stroke="#fff" strokeWidth="1.8" />
            <circle cx="13.6" cy="12.6" r="4" fill="#e01f27" />
            <path d="M13.6 10 V13 M13.6 14 V15.2" stroke="#fff" strokeWidth="1.2" />
          </Svg>
        </button>
        <button type="button" aria-label="Show hidden icons" className="ml-2">
          <Svg w={10} h={7}><path d="M1 5.6 L5 1.4 L9 5.6" stroke="#eee" strokeWidth="1.2" /></Svg>
        </button>
        <button type="button" aria-label="Network" className="ml-2">
          <Svg w={11} h={11}>
            <path d="M1 10 A9 9 0 0 1 10 1 M3.6 10 A6.4 6.4 0 0 1 10 3.8 M6 10 A4 4 0 0 1 10 6.4" stroke="#aaa" />
            <circle cx="9" cy="9.4" r="1.2" fill="#fff" />
          </Svg>
        </button>
        <button type="button" aria-label="Volume" className="ml-[5px]">
          <Svg w={13} h={11}>
            <path d="M0.5 3.8 H2.6 L5.4 1.2 V9.8 L2.6 7.2 H0.5 Z M7 3.8 Q8.4 5.5 7 7.2" stroke="#eee" />
            <path d="M8.8 2.4 Q11 5.5 8.8 8.6 M10.6 1 Q13.6 5.5 10.6 10" stroke="#777" />
          </Svg>
        </button>
        <button type="button" aria-label="Input language" className="mx-[6px] w-5 text-[9px]">ENG</button>
        <div className="flex w-10 flex-col items-center text-[9px] leading-[13px] whitespace-nowrap">
          <span>2:35 PM</span>
          <span>5/2/2017</span>
        </div>
        <button type="button" aria-label="Notifications" className="mr-[7px] ml-[13px]">
          <Svg w={20} h={19}>
            <path d="M1 2 H13 V11.6 H6 L3.6 14 V11.6 H1 Z" fill="#fff" />
            <path d="M3 4.5 H11 M3 6.7 H11 M3 9 H8" stroke="#222" strokeWidth="0.9" />
            <circle cx="12.6" cy="12" r="5.4" fill="#3a3a3a" stroke="#888" />
            <text x="12.6" y="15" textAnchor="middle" fontSize="9" fill="#fff">2</text>
          </Svg>
        </button>
        <span className="mr-[2px] h-full w-px bg-[#555]" />
      </div>
    </footer>
  );
}

export default function App() {
  return (
    <div className="flex h-screen flex-col overflow-hidden bg-white font-[Roboto,'Open_Sans',sans-serif]">
      <Ribbon />
      <div className="flex min-h-0 flex-1 border-t-2 border-[#dfe1e3]">
        <Navigation />
        <div className="w-[3px] shrink-0 border-r border-[#eef0f3] bg-[#dbe0e6]" />
        <div className="flex min-w-0 flex-1 flex-col">
          <TabStrip />
          <AddressBar />
          <Designer />
        </div>
      </div>
      <div className="h-4 shrink-0 bg-[#0072c6]" />
      <Taskbar />
    </div>
  );
}
